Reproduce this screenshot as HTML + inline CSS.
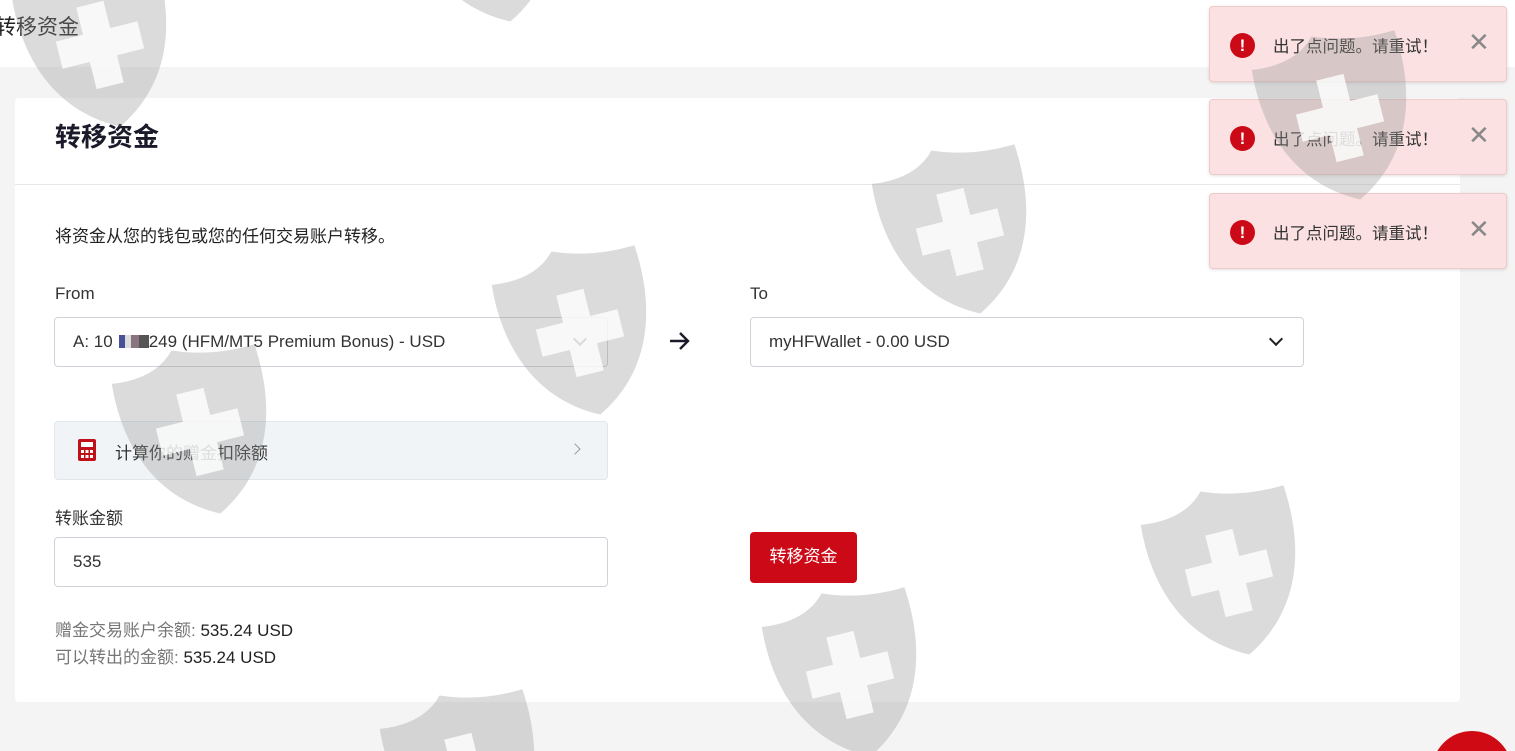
<!DOCTYPE html>
<html><head><meta charset="utf-8"><style>
*{box-sizing:border-box;margin:0;padding:0}
html{width:1515px;height:751px;overflow:hidden}
body{width:1515px;height:751px;overflow:hidden;background:#f4f4f4;font-family:"Liberation Sans","Noto Sans CJK SC",sans-serif;color:#1a1a2a;position:relative}
.top{position:absolute;left:0;top:0;width:1515px;height:67px;background:#fff}
.top h1{position:absolute;left:-5px;top:11px;font-size:21px;font-weight:normal;color:#222}
.card{position:absolute;left:15px;top:98px;width:1445px;height:604px;background:#fff;border-radius:4px}
.card .hd{height:87px;border-bottom:1px solid #e8e8ec;padding:19px 0 0 40px;font-size:26px;font-weight:bold}
.abs{position:absolute}
.lbl{font-size:17px;color:#333}
.sel{position:absolute;height:50px;border:1px solid #cfd2d8;border-radius:4px;background:#fff;font-size:17px;color:#333;padding:14px 0 0 18px}
.chev{position:absolute;right:22px;width:10px;height:10px;border-right:2px solid #222;border-bottom:2px solid #222;transform:rotate(45deg);top:16px}
.toast{position:absolute;left:1209px;width:298px;height:76px;background:#fbe1e1;border:1px solid #efcaca;border-radius:4px;box-shadow:0 1px 3px rgba(0,0,0,.12)}
.toast .ic{position:absolute;left:20px;top:26px;width:25px;height:25px;border-radius:50%;background:#cc0a17;color:#fff;font-weight:bold;text-align:center;font-size:17px;line-height:25px}
.toast .t{position:absolute;left:63px;top:26px;font-size:16.5px;color:#333}
.toast .x{position:absolute;left:258px;top:22px;font-size:26px;color:#888;line-height:26px}
.wm{position:absolute;left:0;top:0;pointer-events:none}
</style></head><body>
<div class="top"><h1>转移资金</h1></div>
<div class="card"><div class="hd">转移资金</div></div>
<div class="abs" style="left:55px;top:222px;font-size:17px;color:#222">将资金从您的钱包或您的任何交易账户转移。</div>
<div class="abs lbl" style="left:55px;top:284px">From</div>
<div class="abs lbl" style="left:750px;top:284px">To</div>
<div class="sel" style="left:54px;top:317px;width:554px">A: 10<span style="display:inline-block;width:36px;height:13px;vertical-align:-1px;background:linear-gradient(90deg,#fff 0 6px,#4a4f99 6px 12px,#ddd 12px 18px,#8a7480 18px 26px,#555 26px)"></span>249 (HFM/MT5 Premium Bonus) - USD<div class="chev"></div></div>
<svg class="abs" style="left:668px;top:331px" width="24" height="20" viewBox="0 0 24 20"><path d="M2 10H20M12 2L20 10L12 18" stroke="#1a1a2a" stroke-width="2.4" fill="none"/></svg>
<div class="sel" style="left:750px;top:317px;width:554px">myHFWallet - 0.00 USD<div class="chev"></div></div>
<div class="abs" style="left:54px;top:421px;width:554px;height:59px;background:#f1f4f7;border:1px solid #e1e6ea;border-radius:4px">
<svg class="abs" style="left:22px;top:16px" width="20" height="24" viewBox="0 0 20 24"><rect x="1" y="1" width="18" height="22" rx="2" fill="#c0101a"/><rect x="4" y="4" width="12" height="5" fill="#fff"/><g fill="#fff"><rect x="4" y="12" width="3" height="3"/><rect x="8.5" y="12" width="3" height="3"/><rect x="13" y="12" width="3" height="3"/><rect x="4" y="17" width="3" height="3"/><rect x="8.5" y="17" width="3" height="3"/><rect x="13" y="17" width="3" height="3"/></g></svg>
<div class="abs" style="left:60px;top:17px;font-size:17px;color:#333">计算你的赠金扣除额</div>
<div class="abs" style="left:516px;width:8px;height:8px;border-right:1.5px solid #999;border-top:1.5px solid #999;transform:rotate(45deg);top:23px"></div>
</div>
<div class="abs lbl" style="left:55px;top:504px">转账金额</div>
<div class="sel" style="left:54px;top:537px;width:554px">535</div>
<div class="abs" style="left:750px;top:532px;width:107px;height:51px;background:#cc0a17;border-radius:4px;color:#fff;font-size:17px;text-align:center;line-height:49px">转移资金</div>
<div class="abs" style="left:55px;top:616px;font-size:17px;color:#777">赠金交易账户余额: <span style="color:#222">535.24 USD</span></div>
<div class="abs" style="left:55px;top:643px;font-size:17px;color:#777">可以转出的金额: <span style="color:#222">535.24 USD</span></div>
<svg class="abs" style="left:1432px;top:731px" width="83" height="20" viewBox="0 0 83 20"><circle cx="40" cy="40" r="40" fill="#d00a14"/></svg>
<div class="toast" style="top:6px"><div class="ic">!</div><div class="t">出了点问题。请重试！</div><div class="x">✕</div></div>
<div class="toast" style="top:99px"><div class="ic">!</div><div class="t">出了点问题。请重试！</div><div class="x">✕</div></div>
<div class="toast" style="top:193px"><div class="ic">!</div><div class="t">出了点问题。请重试！</div><div class="x">✕</div></div>
<svg class="wm" width="1515" height="751" viewBox="0 0 1515 751">
<defs><g id="s"><path d="M-74,-68 Q-30,-62 -8,-86 Q30,-70 74,-72 C80,5 52,58 0,84 C-52,58 -80,5 -74,-68 Z" fill="rgba(150,150,150,0.34)"/><path d="M-14,-42H14V-14H42V14H14V42H-14V14H-42V-14H-14Z" fill="#fff" opacity="0.8"/></g></defs>
<g transform="translate(100,45) rotate(-14)"><use href="#s"/></g>
<g transform="translate(490,-60) rotate(-14)"><use href="#s"/></g>
<g transform="translate(580,333) rotate(-14)"><use href="#s"/></g>
<g transform="translate(960,232) rotate(-14)"><use href="#s"/></g>
<g transform="translate(200,432) rotate(-14)"><use href="#s"/></g>
<g transform="translate(1340,118) rotate(-14)"><use href="#s"/></g>
<g transform="translate(1229,573) rotate(-14)"><use href="#s"/></g>
<g transform="translate(850,675) rotate(-14)"><use href="#s"/></g>
<g transform="translate(468,777) rotate(-14)"><use href="#s"/></g>
</svg>
</body></html>
